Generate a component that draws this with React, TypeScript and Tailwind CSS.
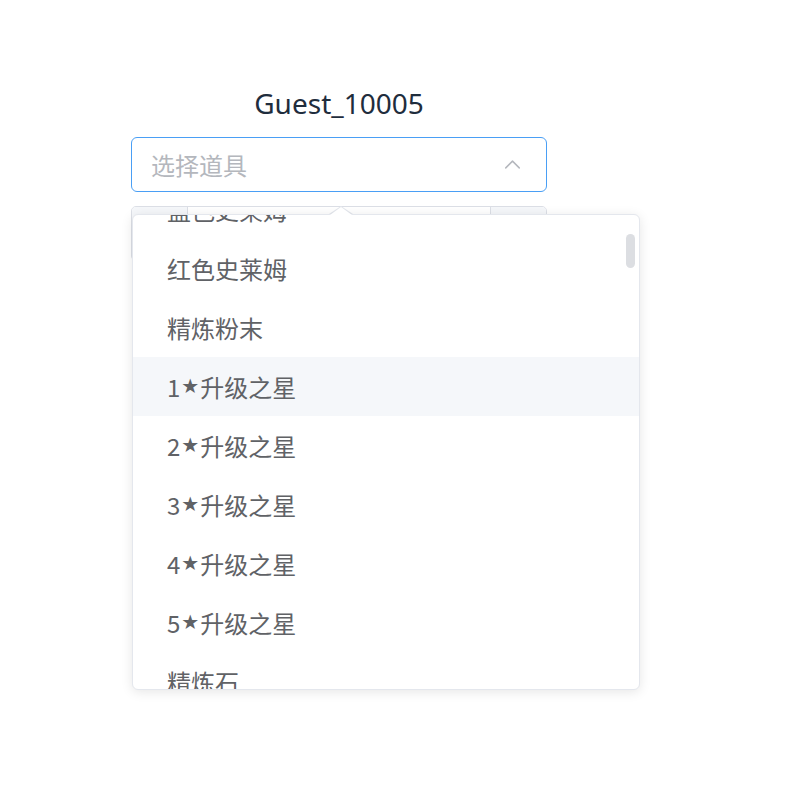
import { ChevronUp } from 'lucide-react';

const items = [
    '蓝色史莱姆',
    '红色史莱姆',
    '精炼粉末',
    '1★升级之星',
    '2★升级之星',
    '3★升级之星',
    '4★升级之星',
    '5★升级之星',
    '精炼石',
];

const hovered = '1★升级之星';

function ItemLabel({ text }: { text: string }) {
    // star glyph is narrower in the original font than in CJK fonts
    const parts = text.split('★');
    if (parts.length === 1) return <>{text}</>;
    return (
        <>
            {parts[0]}
            <span className="mx-[1px] text-[20px] font-['DejaVu_Sans',sans-serif] relative -top-[1px]">★</span>
            {parts[1]}
        </>
    );
}

export default function App() {
    return (
        <div className="min-h-[809px] bg-white font-['Noto_Sans','Noto_Sans_CJK_SC',sans-serif]">
            <div className="relative ml-[131px] w-[416px] pt-[84px]">
                {/* Header */}
                <h1 className="text-center text-[28px] leading-[38px] text-[#1f2d3d]">Guest_10005</h1>

                {/* Select */}
                <div className="mt-[15px] flex h-[55px] items-center rounded-[6px] border-[1.5px] border-[#4a9ff5] pl-[19px] pr-[20px]">
                    <span className="flex-1 text-[24px] text-[#b4b7bd] font-['Noto_Sans_CJK_SC',sans-serif]">选择道具</span>
                    <ChevronUp className="h-[27px] w-[27px] text-[#b4b7bd]" strokeWidth={1.3} />
                </div>

                {/* Input number behind the dropdown */}
                <div className="mt-[14px] flex h-[55px] overflow-hidden rounded-[5px] border border-[#dcdfe6]">
                    <div className="w-[56px] border-r border-[#dcdfe6] bg-[#f5f7fa]" />
                    <div className="flex-1 bg-white" />
                    <div className="w-[56px] border-l border-[#dcdfe6] bg-[#f5f7fa]" />
                </div>

                {/* Dropdown */}
                <div className="absolute left-[1px] top-[206px] w-[508px]">
                    <div className="absolute left-[197px] top-0 h-0 w-0 border-x-[12px] border-b-[8px] border-x-transparent border-b-[#e4e7ed]" />
                    <div className="absolute left-[198px] top-[1px] h-0 w-0 border-x-[11px] border-b-[8px] border-x-transparent border-b-white z-10" />
                    <div className="relative mt-[8px] h-[476px] overflow-hidden rounded-[6px] border border-[#e4e7ed] bg-white shadow-[0_2px_12px_rgba(0,0,0,0.1)]">
                        <ul className="-mt-[35px] font-['Noto_Sans_CJK_SC',sans-serif]">
                            {items.map((item) => (
                                <li
                                    key={item}
                                    className={`flex h-[59px] items-center px-[34px] text-[24px] text-[#606266] ${item === hovered ? 'bg-[#f5f7fa]' : ''}`}
                                >
                                    <ItemLabel text={item} />
                                </li>
                            ))}
                        </ul>
                        <div className="absolute right-[4px] top-[19px] h-[34px] w-[9px] rounded-full bg-[#dcdee2]" />
                    </div>
                </div>
            </div>
        </div>
    );
}
